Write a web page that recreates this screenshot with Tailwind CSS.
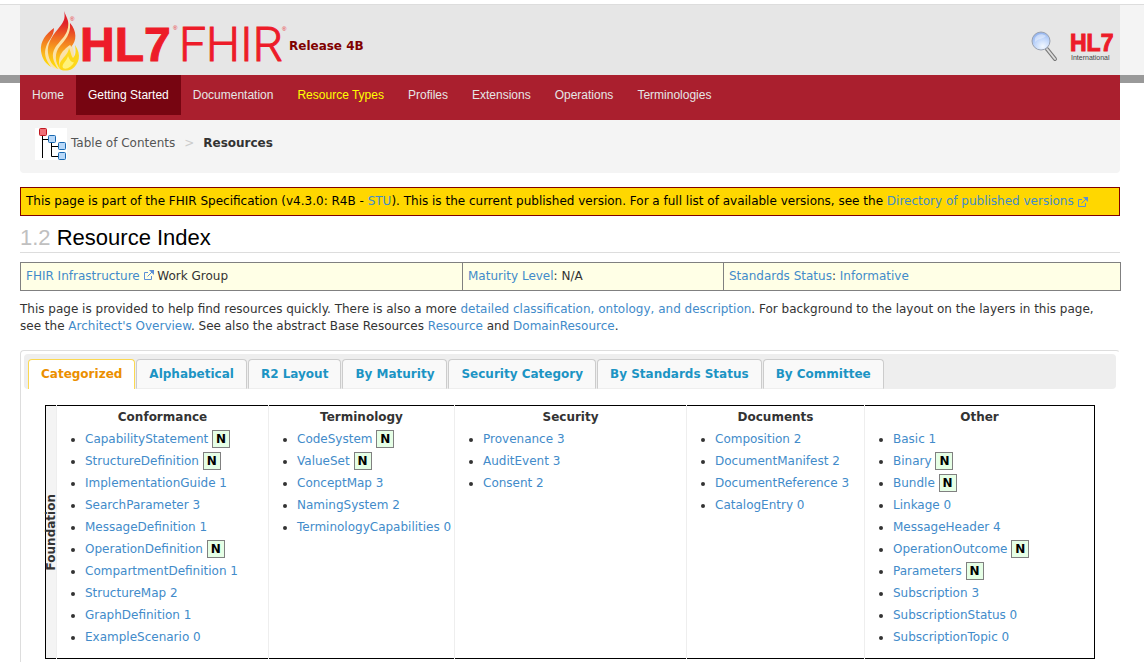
<!DOCTYPE html>
<html lang="en">
<head>
  <meta charset="utf-8">
  <meta name="viewport" content="width=device-width, initial-scale=1">
  <title>Resource Index - FHIR v4.3.0</title>
  <script src="https://cdn.jsdelivr.net/npm/@tailwindcss/browser@4"></script>
</head>
<body class="bg-white pt-1 font-['Verdana','DejaVu_Sans',sans-serif] text-xs text-[#333]">

  <!-- header -->
  <header class="border-t border-[#ddd] border-b-8 border-b-[#999] bg-[#f4f4f4] pl-5 pr-6">
    <div class="flex h-[70px] items-center justify-between bg-[#e6e6e6] pl-5 pr-[6px]">
      <div class="flex items-center">
        <a href="#" aria-label="HL7 FHIR">
          <svg width="249" height="62" viewBox="0 0 249 62" class="overflow-visible">
            <defs>
              <linearGradient id="flame" gradientUnits="userSpaceOnUse" x1="24" y1="2" x2="20" y2="61">
                <stop offset="0.2" stop-color="#e0202a" />
                <stop offset="0.45" stop-color="#ef6a22" />
                <stop offset="0.75" stop-color="#fbb81c" />
                <stop offset="1" stop-color="#ffe800" />
              </linearGradient>
            </defs>
            <path fill="#fbe2a8" d="M25 8C30 14 35 24 32 36C36 46 34 56 24 60C12 62 4 54 4 42C6 30 24 24 25 8Z" />
            <g fill="url(#flame)">
              <path d="M14 19C6 25 0 32 1 42C2 50 6 55 11 58C5 50 4 44 6 38C8 31 14 28 14 19Z" />
              <path d="M24 2C26 10 23 14 18 20C11 28 7 36 8 44C9 52 13 57 18 60C13 52 11 46 15 39C20 31 30 25 28 12C27 8 25 5 24 2Z" />
              <path d="M30 14C31 25 25 31 20 37C14 44 15 54 20 60C18 52 19 47 23 42C28 37 31 34 31 38C37 32 37 22 30 14Z" />
            </g>
            <path fill="#fdd81c" d="M29 39C31 43 31 47 33 49C36 46 36 42 35 36C42 46 39 55 32 60C28 62 22 62 20 60C17 51 28 48 29 39Z" />
            <path fill="#fff27a" d="M28 47C30 52 32 54 34 53C32 58 26 61 23 59C21 55 27 52 28 47Z" />
            <g fill="#ed1c29" font-family="Liberation Sans, sans-serif">
              <text x="40" y="52" font-size="48" font-weight="700" stroke="#ed1c29">HL7</text>
              <text x="139" y="52" font-size="48" font-weight="300" font-family="Roboto, sans-serif" stroke="#ed1c29">FHIR</text>
              <text x="30" y="12" font-size="6">®</text>
              <text x="133" y="21" font-size="6">®</text>
              <text x="242" y="22" font-size="6">®</text>
            </g>
          </svg>
        </a>
        <span class="pt-3 font-bold text-[#800000]">Release 4B</span>
      </div>
      <div class="flex items-center gap-3 pt-3">
        <a href="#" aria-label="Search">
          <svg width="28" height="34" viewBox="0 0 28 34">
            <defs>
              <radialGradient id="lens" cx="0.6" cy="0.8" r="0.8">
                <stop offset="0" stop-color="#f2f8ff" />
                <stop offset="0.6" stop-color="#bdd4fa" />
                <stop offset="1" stop-color="#8fb0ec" />
              </radialGradient>
            </defs>
            <path d="M17 20L25 30" stroke="#777" stroke-width="4" stroke-linecap="round" />
            <path d="M17 20L25 30" stroke="#ddd" stroke-width="2" stroke-linecap="round" />
            <circle cx="11" cy="12" r="9" fill="url(#lens)" stroke="#9aa2b0" />
            <path d="M5 9C7 5 12 4 16 7C13 10 9 9 5 13Z" fill="#fff" opacity="0.4" />
          </svg>
        </a>
        <a href="#" aria-label="HL7 International">
          <svg width="44" height="34" viewBox="0 0 44 34">
            <text x="0" y="22" font-family="Liberation Sans, sans-serif" font-size="23" font-weight="700" fill="#ed1c29" stroke="#ed1c29">HL7</text>
            <text x="1" y="31" font-family="Liberation Sans, sans-serif" font-size="7" fill="#444">International</text>
          </svg>
        </a>
      </div>
    </div>
  </header>

  <main class="relative -mt-2 pl-5 pr-6">
    <nav class="flex h-[45px] items-start bg-[#aa1f2e] font-['Liberation_Sans',Arial,sans-serif] leading-5 text-[#e6e6e6]">
      <a href="#" class="px-3 py-[10px]">Home</a>
      <a href="#" class="bg-[#770511] px-3 py-[10px] text-white">Getting Started</a>
      <a href="#" class="px-3 py-[10px]">Documentation</a>
      <a href="#" class="px-3 py-[10px] text-[#ff0]">Resource Types</a>
      <a href="#" class="px-3 py-[10px]">Profiles</a>
      <a href="#" class="px-3 py-[10px]">Extensions</a>
      <a href="#" class="px-3 py-[10px]">Operations</a>
      <a href="#" class="px-3 py-[10px]">Terminologies</a>
    </nav>

    <!-- breadcrumb -->
    <div class="flex h-[53px] items-start rounded-b bg-[#f4f4f4] pl-[15px] pt-2">
      <svg width="32" height="32" viewBox="0 0 32 32" class="bg-white">
        <path d="M7.500 8V30M7 11.500H14M16.500 15V28.500H23M17 18.500H23" fill="none" stroke="#000" />
        <rect x="4.500" y="0.500" width="7" height="7" rx="1" fill="#f07078" stroke="#c01820" />
        <rect x="13.500" y="7.500" width="7" height="7" rx="1" fill="#b8d8f8" stroke="#1868b0" />
        <rect x="23.500" y="14.500" width="7" height="7" rx="1" fill="#b8d8f8" stroke="#1868b0" />
        <rect x="23.500" y="24.500" width="7" height="7" rx="1" fill="#b8d8f8" stroke="#1868b0" />
      </svg>
      <div class="flex gap-[9px] pl-1 pt-[7px]">
        <a href="#" class="text-[#555]">Table of Contents</a>
        <span class="text-[#ccc]">&gt;</span>
        <b>Resources</b>
      </div>
    </div>

    <p class="mt-[14px] border border-[#800000] bg-[#ffd700] px-[5px] pt-[5px] pb-[6px] text-black">
      This page is part of the FHIR Specification (v4.3.0: R4B - <a href="#" class="text-[#428bca]">STU</a>). This is the current published version. For a full list of available versions, see the
      <a href="#" class="text-[#428bca]">Directory of published versions <svg width="10" height="10" viewBox="0 0 10 10" class="inline" fill="none" stroke="#5b8fd6"><path d="M4 2.500H0.500V9.500H7.500V6M3.500 6.500L8.500 1.500" /><path d="M5 0H10V5Z" fill="#5b8fd6" stroke="none" /></svg></a>
    </p>

    <h1 class="mt-2 border-b border-[#ddd] font-['Liberation_Sans',Arial,sans-serif] text-[22px] leading-7 text-black"><span class="text-[#c0c0c0]">1.2</span> Resource Index</h1>

    <table class="mt-[9px] w-full table-fixed border-collapse border border-[#808080] bg-[#ffffe6]">
      <colgroup><col class="w-[442px]"><col class="w-[261px]"><col class="w-[397px]"></colgroup>
      <tr>
        <td class="border border-[#808080] px-[5px] pt-[5px] pb-[6px]"><a href="#" class="text-[#428bca]">FHIR Infrastructure <svg width="10" height="10" viewBox="0 0 10 10" class="inline align-baseline" fill="none" stroke="#5b8fd6"><path d="M4 2.500H0.500V9.500H7.500V6M3.500 6.500L8.500 1.500" /><path d="M5 0H10V5Z" fill="#5b8fd6" stroke="none" /></svg></a> Work Group</td>
        <td class="border border-[#808080] px-[5px] pt-[5px] pb-[6px]"><a href="#" class="text-[#428bca]">Maturity Level</a>: N/A</td>
        <td class="border border-[#808080] px-[5px] pt-[5px] pb-[6px]"><a href="#" class="text-[#428bca]">Standards Status</a>: <a href="#" class="text-[#428bca]">Informative</a></td>
      </tr>
    </table>

    <p class="mt-[10px] pr-4 leading-[17px]">
      This page is provided to help find resources quickly. There is also a more <a href="#" class="text-[#428bca]">detailed classification, ontology, and description</a>. For background to the layout on the layers in this page, see the <a href="#" class="text-[#428bca]">Architect's Overview</a>. See also the abstract Base Resources <a href="#" class="text-[#428bca]">Resource</a> and <a href="#" class="text-[#428bca]">DomainResource</a>.
    </p>

    <!-- tabs -->
    <div class="mt-[15px] rounded border border-[#ddd] border-r-transparent p-[3px]">
      <div class="flex h-[35px] items-end gap-px rounded bg-[#eee] pl-1 font-bold text-[#1c94c4]">
        <a href="#" class="rounded-t border border-b-0 border-[#fbd850] bg-white px-3 pt-[6px] pb-[7px] text-[#eb8f00]">Categorized</a>
        <a href="#" class="rounded-t border border-[#ccc] border-b-[#eee] bg-[#f9f9f9] px-3 py-[6px]">Alphabetical</a>
        <a href="#" class="rounded-t border border-[#ccc] border-b-[#eee] bg-[#f9f9f9] px-3 py-[6px]">R2 Layout</a>
        <a href="#" class="rounded-t border border-[#ccc] border-b-[#eee] bg-[#f9f9f9] px-3 py-[6px]">By Maturity</a>
        <a href="#" class="rounded-t border border-[#ccc] border-b-[#eee] bg-[#f9f9f9] px-3 py-[6px]">Security Category</a>
        <a href="#" class="rounded-t border border-[#ccc] border-b-[#eee] bg-[#f9f9f9] px-3 py-[6px]">By Standards Status</a>
        <a href="#" class="rounded-t border border-[#ccc] border-b-[#eee] bg-[#f9f9f9] px-3 py-[6px]">By Committee</a>
      </div>

      <div class="px-[21px] pt-4 pb-6">
        <table class="h-[254px] w-full table-fixed border border-black">
          <colgroup><col class="w-[11px]"><col class="w-[212px]"><col class="w-[186px]"><col class="w-[232px]"><col class="w-[178px]"><col class="w-[230px]"></colgroup>
          <tr class="align-top">
            <th class="bg-[#f4f4f4] align-middle"><span class="block w-[11px] rotate-180 leading-[11px] [writing-mode:vertical-rl]">Foundation</span></th>
            <td class="border-l border-[#eee] pt-[3px]">
              <h2 class="text-center font-bold">Conformance</h2>
              <ul class="mt-[3px] list-disc pl-7 leading-[22px]">
                <li><a href="#" class="text-[#428bca]">CapabilityStatement</a> <a href="#" class="border border-[#808080] bg-[#e6ffe6] px-[3px] py-px font-bold text-black">N</a></li>
                <li><a href="#" class="text-[#428bca]">StructureDefinition</a> <a href="#" class="border border-[#808080] bg-[#e6ffe6] px-[3px] py-px font-bold text-black">N</a></li>
                <li><a href="#" class="text-[#428bca]">ImplementationGuide 1</a></li>
                <li><a href="#" class="text-[#428bca]">SearchParameter 3</a></li>
                <li><a href="#" class="text-[#428bca]">MessageDefinition 1</a></li>
                <li><a href="#" class="text-[#428bca]">OperationDefinition</a> <a href="#" class="border border-[#808080] bg-[#e6ffe6] px-[3px] py-px font-bold text-black">N</a></li>
                <li><a href="#" class="text-[#428bca]">CompartmentDefinition 1</a></li>
                <li><a href="#" class="text-[#428bca]">StructureMap 2</a></li>
                <li><a href="#" class="text-[#428bca]">GraphDefinition 1</a></li>
                <li><a href="#" class="text-[#428bca]">ExampleScenario 0</a></li>
              </ul>
            </td>
            <td class="border-l border-[#eee] pt-[3px]">
              <h2 class="text-center font-bold">Terminology</h2>
              <ul class="mt-[3px] list-disc pl-7 leading-[22px] whitespace-nowrap">
                <li><a href="#" class="text-[#428bca]">CodeSystem</a> <a href="#" class="border border-[#808080] bg-[#e6ffe6] px-[3px] py-px font-bold text-black">N</a></li>
                <li><a href="#" class="text-[#428bca]">ValueSet</a> <a href="#" class="border border-[#808080] bg-[#e6ffe6] px-[3px] py-px font-bold text-black">N</a></li>
                <li><a href="#" class="text-[#428bca]">ConceptMap 3</a></li>
                <li><a href="#" class="text-[#428bca]">NamingSystem 2</a></li>
                <li><a href="#" class="text-[#428bca]">TerminologyCapabilities 0</a></li>
              </ul>
            </td>
            <td class="border-l border-[#eee] pt-[3px]">
              <h2 class="text-center font-bold">Security</h2>
              <ul class="mt-[3px] list-disc pl-7 leading-[22px]">
                <li><a href="#" class="text-[#428bca]">Provenance 3</a></li>
                <li><a href="#" class="text-[#428bca]">AuditEvent 3</a></li>
                <li><a href="#" class="text-[#428bca]">Consent 2</a></li>
              </ul>
            </td>
            <td class="border-l border-[#eee] pt-[3px]">
              <h2 class="text-center font-bold">Documents</h2>
              <ul class="mt-[3px] list-disc pl-7 leading-[22px]">
                <li><a href="#" class="text-[#428bca]">Composition 2</a></li>
                <li><a href="#" class="text-[#428bca]">DocumentManifest 2</a></li>
                <li><a href="#" class="text-[#428bca]">DocumentReference 3</a></li>
                <li><a href="#" class="text-[#428bca]">CatalogEntry 0</a></li>
              </ul>
            </td>
            <td class="border-l border-[#eee] pt-[3px]">
              <h2 class="text-center font-bold">Other</h2>
              <ul class="mt-[3px] list-disc pl-7 leading-[22px]">
                <li><a href="#" class="text-[#428bca]">Basic 1</a></li>
                <li><a href="#" class="text-[#428bca]">Binary</a> <a href="#" class="border border-[#808080] bg-[#e6ffe6] px-[3px] py-px font-bold text-black">N</a></li>
                <li><a href="#" class="text-[#428bca]">Bundle</a> <a href="#" class="border border-[#808080] bg-[#e6ffe6] px-[3px] py-px font-bold text-black">N</a></li>
                <li><a href="#" class="text-[#428bca]">Linkage 0</a></li>
                <li><a href="#" class="text-[#428bca]">MessageHeader 4</a></li>
                <li><a href="#" class="text-[#428bca]">OperationOutcome</a> <a href="#" class="border border-[#808080] bg-[#e6ffe6] px-[3px] py-px font-bold text-black">N</a></li>
                <li><a href="#" class="text-[#428bca]">Parameters</a> <a href="#" class="border border-[#808080] bg-[#e6ffe6] px-[3px] py-px font-bold text-black">N</a></li>
                <li><a href="#" class="text-[#428bca]">Subscription 3</a></li>
                <li><a href="#" class="text-[#428bca]">SubscriptionStatus 0</a></li>
                <li><a href="#" class="text-[#428bca]">SubscriptionTopic 0</a></li>
              </ul>
            </td>
          </tr>
        </table>
      </div>
    </div>
  </main>
</body>
</html>
